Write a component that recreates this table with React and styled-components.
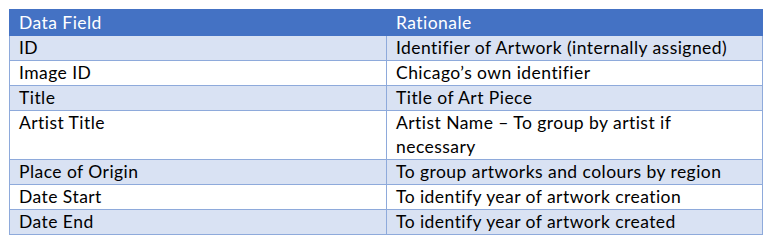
import React from 'react';
import styled, { createGlobalStyle } from 'styled-components';

const GlobalStyle = createGlobalStyle`
  body {
    margin: 0;
    background: #ffffff;
    font-family: Lato, "Liberation Sans", sans-serif;
  }
`;

const Page = styled.div`
  padding: 9px 0 0 9px;
`;

const Table = styled.table`
  border-collapse: collapse;
  width: 753px;
  table-layout: fixed;
  font-size: 17.5px;
  letter-spacing: 0.45px;
  color: #000000;
`;

const HeadCell = styled.th`
  background: #4472c4;
  color: #ffffff;
  font-weight: 400;
  text-align: left;
  height: 25px;
  padding: 0 8px 0 9px;
  border: 1px solid #4472c4;
  line-height: 25px;
`;

const Row = styled.tr`
  background: ${props => (props.$band ? '#d9e2f3' : '#ffffff')};
`;

const Cell = styled.td`
  vertical-align: top;
  padding: 0 8px 0 9px;
  border: 1px solid #8eaadb;
  line-height: 24px;
  height: 24px;
`;

const rows = [
  ['ID', 'Identifier of Artwork (internally assigned)'],
  ['Image ID', 'Chicago\u2019s own identifier'],
  ['Title', 'Title of Art Piece'],
  ['Artist Title', 'Artist Name \u2013 To group by artist if necessary'],
  ['Place of Origin', 'To group artworks and colours by region'],
  ['Date Start', 'To identify year of artwork creation'],
  ['Date End', 'To identify year of artwork created'],
];

export default function App() {
  return (
    <Page>
      <GlobalStyle />
      <Table>
        <colgroup>
          <col style={{ width: 377 }} />
          <col style={{ width: 376 }} />
        </colgroup>
        <thead>
          <tr>
            <HeadCell>Data Field</HeadCell>
            <HeadCell>Rationale</HeadCell>
          </tr>
        </thead>
        <tbody>
          {rows.map(([field, why], i) => (
            <Row key={field} $band={i % 2 === 0}>
              <Cell>{field}</Cell>
              <Cell>{why}</Cell>
            </Row>
          ))}
        </tbody>
      </Table>
    </Page>
  );
}
